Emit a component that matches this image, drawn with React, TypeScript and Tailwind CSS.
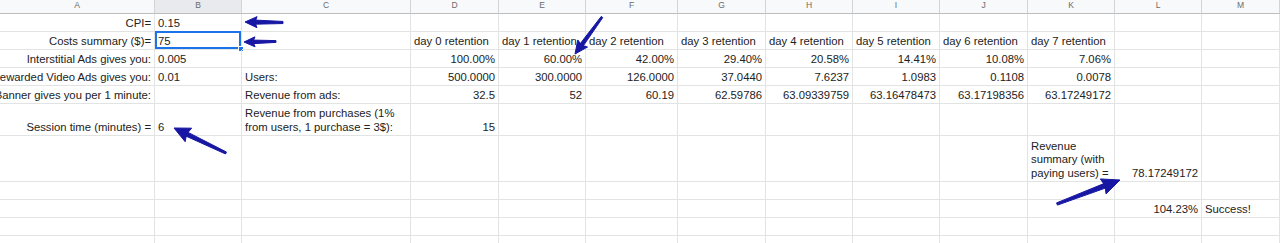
import React from "react";

type Cell = { t?: React.ReactNode; r?: boolean };

const cols = ["A", "B", "C", "D", "E", "F", "G", "H", "I", "J", "K", "L", "M"];

const dayHeads: Cell[] = [0, 1, 2, 3, 4, 5, 6, 7].map((d) => ({ t: `day ${d} retention` }));
const nums = (list: string[]): Cell[] => list.map((t) => ({ t, r: true }));

const rows: Cell[][] = [
  [{ t: "CPI=", r: true }, { t: "0.15" }],
  [{ t: "Costs summary ($)=", r: true }, { t: "75" }, {}, ...dayHeads],
  [
    { t: "Interstitial Ads gives you:", r: true },
    { t: "0.005" },
    {},
    ...nums(["100.00%", "60.00%", "42.00%", "29.40%", "20.58%", "14.41%", "10.08%", "7.06%"]),
  ],
  [
    { t: "Rewarded Video Ads gives you:", r: true },
    { t: "0.01" },
    { t: "Users:" },
    ...nums(["500.0000", "300.0000", "126.0000", "37.0440", "7.6237", "1.0983", "0.1108", "0.0078"]),
  ],
  [
    { t: "Banner gives you per 1 minute:", r: true },
    {},
    { t: "Revenue from ads:" },
    ...nums(["32.5", "52", "60.19", "62.59786", "63.09339759", "63.16478473", "63.17198356", "63.17249172"]),
  ],
  [
    { t: "Session time (minutes) =", r: true },
    { t: "6" },
    {
      t: (
        <>
          Revenue from purchases (1%
          <br />
          from users, 1 purchase = 3$):
        </>
      ),
    },
    { t: "15", r: true },
  ],
  [
    {}, {}, {}, {}, {}, {}, {}, {}, {}, {},
    {
      t: (
        <>
          Revenue
          <br />
          summary (with
          <br />
          paying users) =
        </>
      ),
    },
    { t: "78.17249172", r: true },
  ],
  [],
  [{}, {}, {}, {}, {}, {}, {}, {}, {}, {}, {}, { t: "104.23%", r: true }, { t: "Success!" }],
  [],
  [],
];

type ArrowProps = { x1: number; y1: number; x2: number; y2: number; len: number; wid: number; s: number };

// hand-drawn style arrow: tapered shaft from tail (x1,y1) to tip (x2,y2)
const Arrow = ({ x1, y1, x2, y2, len, wid, s }: ArrowProps) => {
  const dx = x2 - x1;
  const dy = y2 - y1;
  const d = Math.hypot(dx, dy);
  const ux = dx / d;
  const uy = dy / d;
  const px = -uy;
  const py = ux;
  const bx = x2 - ux * len;
  const by = y2 - uy * len;
  const shaft = [
    [x1 + px * s * 0.3, y1 + py * s * 0.3],
    [bx + ux * 3 + px * s * 0.6, by + uy * 3 + py * s * 0.6],
    [bx + ux * 3 - px * s * 0.6, by + uy * 3 - py * s * 0.6],
    [x1 - px * s * 0.3, y1 - py * s * 0.3],
  ];
  const head = [
    [x2, y2],
    [bx + px * wid * 0.5, by + py * wid * 0.5],
    [bx + ux * 2, by + uy * 2],
    [bx - px * wid * 0.5, by - py * wid * 0.5],
  ];
  const pts = (p: number[][]) => p.map((q) => q.join(",")).join(" ");
  return (
    <g fill="#1717a3" stroke="#1717a3" strokeLinejoin="round" strokeWidth={1}>
      <polygon points={pts(shaft)} />
      <polygon points={pts(head)} />
    </g>
  );
};

const App: React.FC = () => (
  <div className="relative h-[243px] w-[1280px] overflow-hidden bg-white font-['Liberation_Sans',Arial,sans-serif] text-[11.3px] text-[#222]">
    <div className="grid grid-cols-[155px_87px_169px_88px_87px_92px_88px_87px_87px_88px_87px_87px_78px] grid-rows-[14px_18px_18px_18px_18px_18px_32px_46px_18px_18px_18px_18px]">
      {cols.map((c) => (
        <div
          key={c}
          className={`flex justify-center border-r border-b border-r-[#d4d4d4] border-b-[#bdbdbd] ${
            c === "B" ? "bg-[#e8eaed]" : "bg-[#f8f9fa]"
          }`}
        >
          <span className="text-[8.5px] leading-[10px] text-[#6b6b6b]">{c}</span>
        </div>
      ))}
      {rows.map((row, ri) =>
        cols.map((c, ci) => {
          const cell = row[ci] ?? {};
          const selected = ri === 1 && ci === 1;
          return (
            <div
              key={`${ri}-${c}`}
              className={`relative flex items-end whitespace-nowrap border-r border-b border-[#e2e3e3] px-[3px] pb-[1px] leading-[13.5px] ${
                cell.r ? "justify-end" : "justify-start"
              }`}
            >
              {cell.t && <span>{cell.t}</span>}
              {selected && (
                <>
                  <div className="absolute top-[-1px] left-0 right-0 bottom-0 border-2 border-[#1a73e8]" />
                  <div className="absolute right-[-3px] bottom-[-3px] h-[6px] w-[6px] border border-white bg-[#1a73e8]" />
                </>
              )}
            </div>
          );
        })
      )}
    </div>

    <svg className="pointer-events-none absolute top-0 left-0" width={1280} height={243}>
      <Arrow x1={283} y1={22.5} x2={245} y2={22} len={12} wid={11} s={3.5} />
      <Arrow x1={276} y1={41.5} x2={244} y2={42} len={11} wid={10} s={3} />
      <Arrow x1={602} y1={17} x2={575} y2={54} len={13} wid={12} s={3.2} />
      <Arrow x1={226} y1={153} x2={174} y2={128} len={16} wid={15} s={3.6} />
      <Arrow x1={1057} y1={204} x2={1120} y2={180} len={18} wid={16} s={4} />
    </svg>
  </div>
);

export default App;
